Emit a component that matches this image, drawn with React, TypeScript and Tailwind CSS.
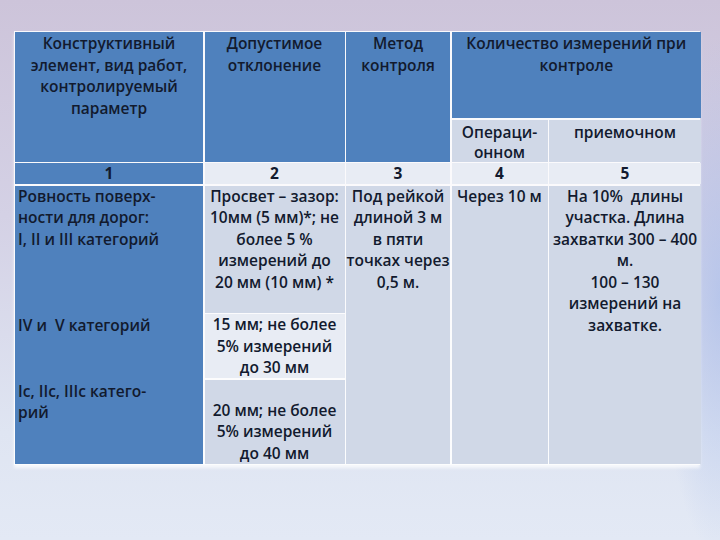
import React from 'react';

const ink = 'text-[#121a2e]';

function Lines({ lines }: { lines: string[] }) {
  return (
    <>
      {lines.map((l, i) => (
        <div key={i} className="whitespace-pre">
          {l}
        </div>
      ))}
    </>
  );
}

export default function App() {
  return (
    <div
      className={`w-[720px] h-[540px] overflow-hidden bg-[radial-gradient(ellipse_60px_260px_at_100%_55%,rgba(170,190,235,0.7),transparent),linear-gradient(to_bottom,#cdc4da_0%,#d4d1e5_40%,#dfe5f2_80%,#e3e9f5_100%)] pt-[31px] pl-[14px] ${ink}`}
      style={{ fontFamily: '"Open Sans", "Noto Sans", sans-serif' }}
    >
      <div className="grid w-[686px] grid-cols-[188px_140px_104px_96px_152px] grid-rows-[86px_42px_21px_127px_64px_84px] gap-[1.5px] bg-white/90 p-[1px] text-[15.5px] font-semibold leading-[21.5px] shadow-[0_3px_3px_rgba(255,255,255,0.7)]">
        {/* header */}
        <div className="row-span-2 bg-[#4f81bd] pt-[1px] text-center">
          <Lines lines={['Конструктивный', 'элемент, вид работ,', 'контролируемый', 'параметр']} />
        </div>
        <div className="row-span-2 bg-[#4f81bd] pt-[1px] text-center">
          <Lines lines={['Допустимое', 'отклонение']} />
        </div>
        <div className="row-span-2 bg-[#4f81bd] pt-[1px] text-center">
          <Lines lines={['Метод', 'контроля']} />
        </div>
        <div className="col-span-2 bg-[#4f81bd] pt-[1px] text-center">
          <Lines lines={['Количество измерений при', 'контроле']} />
        </div>
        <div className="bg-[#d0d8e7] pt-[2px] text-center leading-[20px]">
          <Lines lines={['Операци-', 'онном']} />
        </div>
        <div className="bg-[#d0d8e7] pt-[2px] text-center leading-[20px]">приемочном</div>

        {/* numbers */}
        <div className="bg-[#4f81bd] text-center font-bold leading-[21px]">1</div>
        <div className="bg-[#e8ecf4] text-center font-bold leading-[21px]">2</div>
        <div className="bg-[#e8ecf4] text-center font-bold leading-[21px]">3</div>
        <div className="bg-[#e8ecf4] text-center font-bold leading-[21px]">4</div>
        <div className="bg-[#e8ecf4] text-center font-bold leading-[21px]">5</div>

        {/* body */}
        <div className="row-span-3 grid grid-rows-[129px_66px_1fr] bg-[#4f81bd] pl-[3px] text-left">
          <div>
            <Lines lines={['Ровность поверх-', 'ности для дорог:', 'I, II и III категорий']} />
          </div>
          <div className="whitespace-pre">IV и  V категорий</div>
          <div>
            <Lines lines={['Ic, IIc, IIIc катего-', 'рий']} />
          </div>
        </div>
        <div className="bg-[#d0d8e7] text-center">
          <Lines lines={['Просвет – зазор:', '10мм (5 мм)*; не', 'более 5 %', 'измерений до', '20 мм (10 мм) *']} />
        </div>
        <div className="row-span-3 bg-[#d0d8e7] text-center">
          <Lines lines={['Под рейкой', 'длиной 3 м', 'в пяти', 'точках через', '0,5 м.']} />
        </div>
        <div className="row-span-3 bg-[#d0d8e7] text-center">Через 10 м</div>
        <div className="row-span-3 bg-[#d0d8e7] text-center">
          <Lines
            lines={['На 10%  длины', 'участка. Длина', 'захватки 300 – 400', 'м.', '100 – 130', 'измерений на', 'захватке.']}
          />
        </div>
        <div className="bg-[#e8ecf4] text-center">
          <Lines lines={['15 мм; не более', '5% измерений', 'до 30 мм']} />
        </div>
        <div className="bg-[#d0d8e7] pt-[20px] text-center">
          <Lines lines={['20 мм; не более', '5% измерений', 'до 40 мм']} />
        </div>
      </div>
    </div>
  );
}
